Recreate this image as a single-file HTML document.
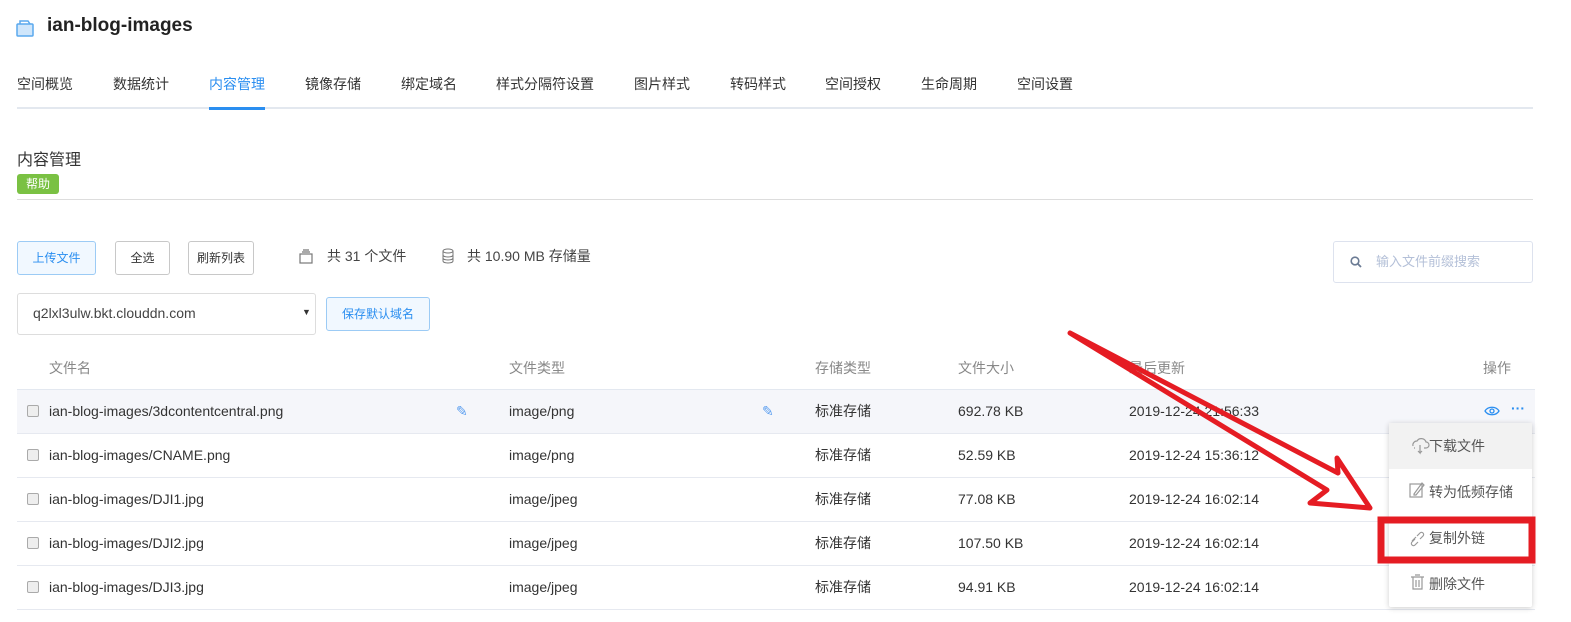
<!DOCTYPE html>
<html><head><meta charset="utf-8"><style>
*{box-sizing:border-box;margin:0;padding:0}
body{width:1571px;height:622px;background:#fff;font-family:"Liberation Sans","Noto Sans CJK SC",sans-serif;color:#333;position:relative;overflow:hidden;font-size:14px}
.a{position:absolute;white-space:nowrap}
.tab{position:absolute;top:74px;font-size:14px;color:#333;line-height:20px}
.btn{position:absolute;border:1px solid #c8c8c8;border-radius:3px;font-size:12px;color:#333;text-align:center;line-height:32px;height:34px;top:241px}
.row{position:absolute;left:17px;width:1518px;height:44px;border-bottom:1px solid #e6e9f0}
.cb{position:absolute;left:10px;top:15px;width:12px;height:12px;border:1px solid #aaa;border-radius:2px;background:#eee}
.c{position:absolute;top:11px;font-size:14px;color:#333;line-height:20px;height:20px}
.hd{position:absolute;top:358px;font-size:14px;color:#888;line-height:20px}
.mi{position:absolute;left:1389px;width:143px;height:46px;font-size:14px;color:#555;line-height:46px;padding-left:40px}
</style></head><body>
<svg class="a" style="left:16px;top:18px" width="20" height="20" viewBox="0 0 20 20"><rect x="1" y="6" width="16" height="12" rx="1" fill="#cfe6fb" stroke="#5aa9ee" stroke-width="1.5"/><path d="M4 6V3h8l2 3" fill="none" stroke="#5aa9ee" stroke-width="1.5"/></svg>
<div class="a" style="left:47px;top:15px;font-size:19px;font-weight:bold;color:#222">ian-blog-images</div>
<div class="tab" style="left:17px">空间概览</div>
<div class="tab" style="left:113px">数据统计</div>
<div class="tab" style="left:209px;color:#2a8ef0">内容管理</div>
<div class="tab" style="left:305px">镜像存储</div>
<div class="tab" style="left:401px">绑定域名</div>
<div class="tab" style="left:496px">样式分隔符设置</div>
<div class="tab" style="left:634px">图片样式</div>
<div class="tab" style="left:730px">转码样式</div>
<div class="tab" style="left:825px">空间授权</div>
<div class="tab" style="left:921px">生命周期</div>
<div class="tab" style="left:1017px">空间设置</div>
<div class="a" style="left:17px;top:107px;width:1516px;height:2px;background:#e3e8ef"></div>
<div class="a" style="left:209px;top:107px;width:56px;height:3px;background:#2a8ef0"></div>
<div class="a" style="left:17px;top:150px;font-size:16px;color:#333;line-height:22px">内容管理</div>
<div class="a" style="left:17px;top:174px;width:42px;height:20px;background:#7ac143;border-radius:3px;color:#fff;font-size:12px;text-align:center;line-height:20px">帮助</div>
<div class="a" style="left:17px;top:199px;width:1516px;height:1px;background:#ddd"></div>
<div class="btn" style="left:17px;width:79px;background:#f1f8ff;border-color:#9ccbf5;color:#2a8ef0">上传文件</div>
<div class="btn" style="left:115px;width:55px">全选</div>
<div class="btn" style="left:188px;width:66px">刷新列表</div>
<svg class="a" style="left:299px;top:248px" width="14" height="16" viewBox="0 0 14 16"><rect x="1" y="6" width="12" height="9" fill="none" stroke="#777" stroke-width="1.2"/><path d="M3 4h8M4 2h6" stroke="#777" stroke-width="1.2"/></svg>
<div class="a" style="left:327px;top:246px;font-size:14px;color:#444;line-height:20px">共 31 个文件</div>
<svg class="a" style="left:442px;top:248px" width="12" height="16" viewBox="0 0 12 16"><ellipse cx="6" cy="3" rx="5" ry="2" fill="none" stroke="#777"/><path d="M1 3v10c0 2.6 10 2.6 10 0V3M1 7c0 2.6 10 2.6 10 0M1 10c0 2.6 10 2.6 10 0" fill="none" stroke="#777"/></svg>
<div class="a" style="left:467px;top:246px;font-size:14px;color:#444;line-height:20px">共 10.90 MB 存储量</div>
<div class="a" style="left:1333px;top:241px;width:200px;height:42px;border:1px solid #dde2ee;border-radius:3px"></div>
<svg class="a" style="left:1350px;top:256px" width="12" height="12" viewBox="0 0 12 12"><circle cx="5" cy="5" r="3.8" fill="none" stroke="#6b7b94" stroke-width="1.6"/><path d="M8 8l3 3" stroke="#6b7b94" stroke-width="1.8"/></svg>
<div class="a" style="left:1376px;top:253px;font-size:13px;color:#b4c0d8;line-height:18px">输入文件前缀搜索</div>
<div class="a" style="left:17px;top:293px;width:299px;height:42px;border:1px solid #ddd;border-radius:3px"></div>
<div class="a" style="left:33px;top:303px;font-size:14px;color:#444;line-height:20px">q2lxl3ulw.bkt.clouddn.com</div>
<div class="a" style="left:302px;top:307px;font-size:9px;color:#333">▼</div>
<div class="a" style="left:326px;top:297px;width:104px;height:34px;border:1px solid #9ccbf5;background:#f1f8ff;border-radius:3px;font-size:12px;color:#2a8ef0;text-align:center;line-height:32px">保存默认域名</div>
<div class="hd" style="left:49px">文件名</div>
<div class="hd" style="left:509px">文件类型</div>
<div class="hd" style="left:815px">存储类型</div>
<div class="hd" style="left:958px">文件大小</div>
<div class="hd" style="left:1129px">最后更新</div>
<div class="hd" style="left:1483px">操作</div>
<div class="a" style="left:17px;top:389px;width:1518px;height:1px;background:#e3e8f0"></div>
<div class="row" style="top:390px;background:#f5f6fa"><div class="cb"></div><div class="c" style="left:32px">ian-blog-images/3dcontentcentral.png</div><div class="c" style="left:439px;color:#5a9ef0">✎</div><div class="c" style="left:492px">image/png</div><div class="c" style="left:745px;color:#5a9ef0">✎</div><div class="c" style="left:798px">标准存储</div><div class="c" style="left:941px">692.78 KB</div><div class="c" style="left:1112px">2019-12-24 21:56:33</div><svg class="a" style="left:1467px;top:15px" width="16" height="12" viewBox="0 0 16 12"><path d="M1 6C4 1 12 1 15 6C12 11 4 11 1 6Z" fill="none" stroke="#2a8ef0" stroke-width="1.3"/><circle cx="8" cy="6" r="2" fill="none" stroke="#2a8ef0" stroke-width="1.3"/></svg><div class="c" style="left:1494px;top:8px;color:#2a8ef0;font-weight:bold">···</div></div>
<div class="row" style="top:434px"><div class="cb"></div><div class="c" style="left:32px">ian-blog-images/CNAME.png</div><div class="c" style="left:492px">image/png</div><div class="c" style="left:798px">标准存储</div><div class="c" style="left:941px">52.59 KB</div><div class="c" style="left:1112px">2019-12-24 15:36:12</div></div>
<div class="row" style="top:478px"><div class="cb"></div><div class="c" style="left:32px">ian-blog-images/DJI1.jpg</div><div class="c" style="left:492px">image/jpeg</div><div class="c" style="left:798px">标准存储</div><div class="c" style="left:941px">77.08 KB</div><div class="c" style="left:1112px">2019-12-24 16:02:14</div></div>
<div class="row" style="top:522px"><div class="cb"></div><div class="c" style="left:32px">ian-blog-images/DJI2.jpg</div><div class="c" style="left:492px">image/jpeg</div><div class="c" style="left:798px">标准存储</div><div class="c" style="left:941px">107.50 KB</div><div class="c" style="left:1112px">2019-12-24 16:02:14</div></div>
<div class="row" style="top:566px"><div class="cb"></div><div class="c" style="left:32px">ian-blog-images/DJI3.jpg</div><div class="c" style="left:492px">image/jpeg</div><div class="c" style="left:798px">标准存储</div><div class="c" style="left:941px">94.91 KB</div><div class="c" style="left:1112px">2019-12-24 16:02:14</div></div>
<div class="a" style="left:1389px;top:423px;width:143px;height:184px;background:#fff;box-shadow:0 1px 6px rgba(0,0,0,.2);border-radius:2px"></div>
<div class="mi" style="top:423px;background:#f2f2f2">下载文件</div>
<div class="mi" style="top:469px">转为低频存储</div>
<div class="mi" style="top:515px">复制外链</div>
<div class="mi" style="top:561px">删除文件</div>
<svg class="a" style="left:0;top:0" width="1571" height="622">
<g fill="none" stroke="#999" stroke-width="1.2">
<path d="M1413 446a4 4 0 0 1 4-5a5 5 0 0 1 9 1a3 3 0 0 1 0 6h-2M1415 448h-1M1420 445v8l-2-2M1420 453l2-2"/>
<rect x="1410" y="484" width="12" height="13"/><path d="M1414 494l8-11 2 2-8 10h-2z"/>
<path d="M1412 541l4-4M1417 536l3-3a2 2 0 0 1 3 3l-3 3M1415 539l-3 3a2 2 0 0 0 3 3l3-3"/>
<path d="M1411 577h13M1413 577v12h9v-12M1415 575h5M1416 580v7M1419 580v7"/>
</g>
<rect x="1381" y="520" width="151" height="40" fill="none" stroke="#e51c23" stroke-width="7"/>
<polygon points="1070,333 1338,473 1337,458 1370,508 1310,503 1327,490" fill="none" stroke="#e51c23" stroke-width="5" stroke-linejoin="round"/>
</svg>
</body></html>
